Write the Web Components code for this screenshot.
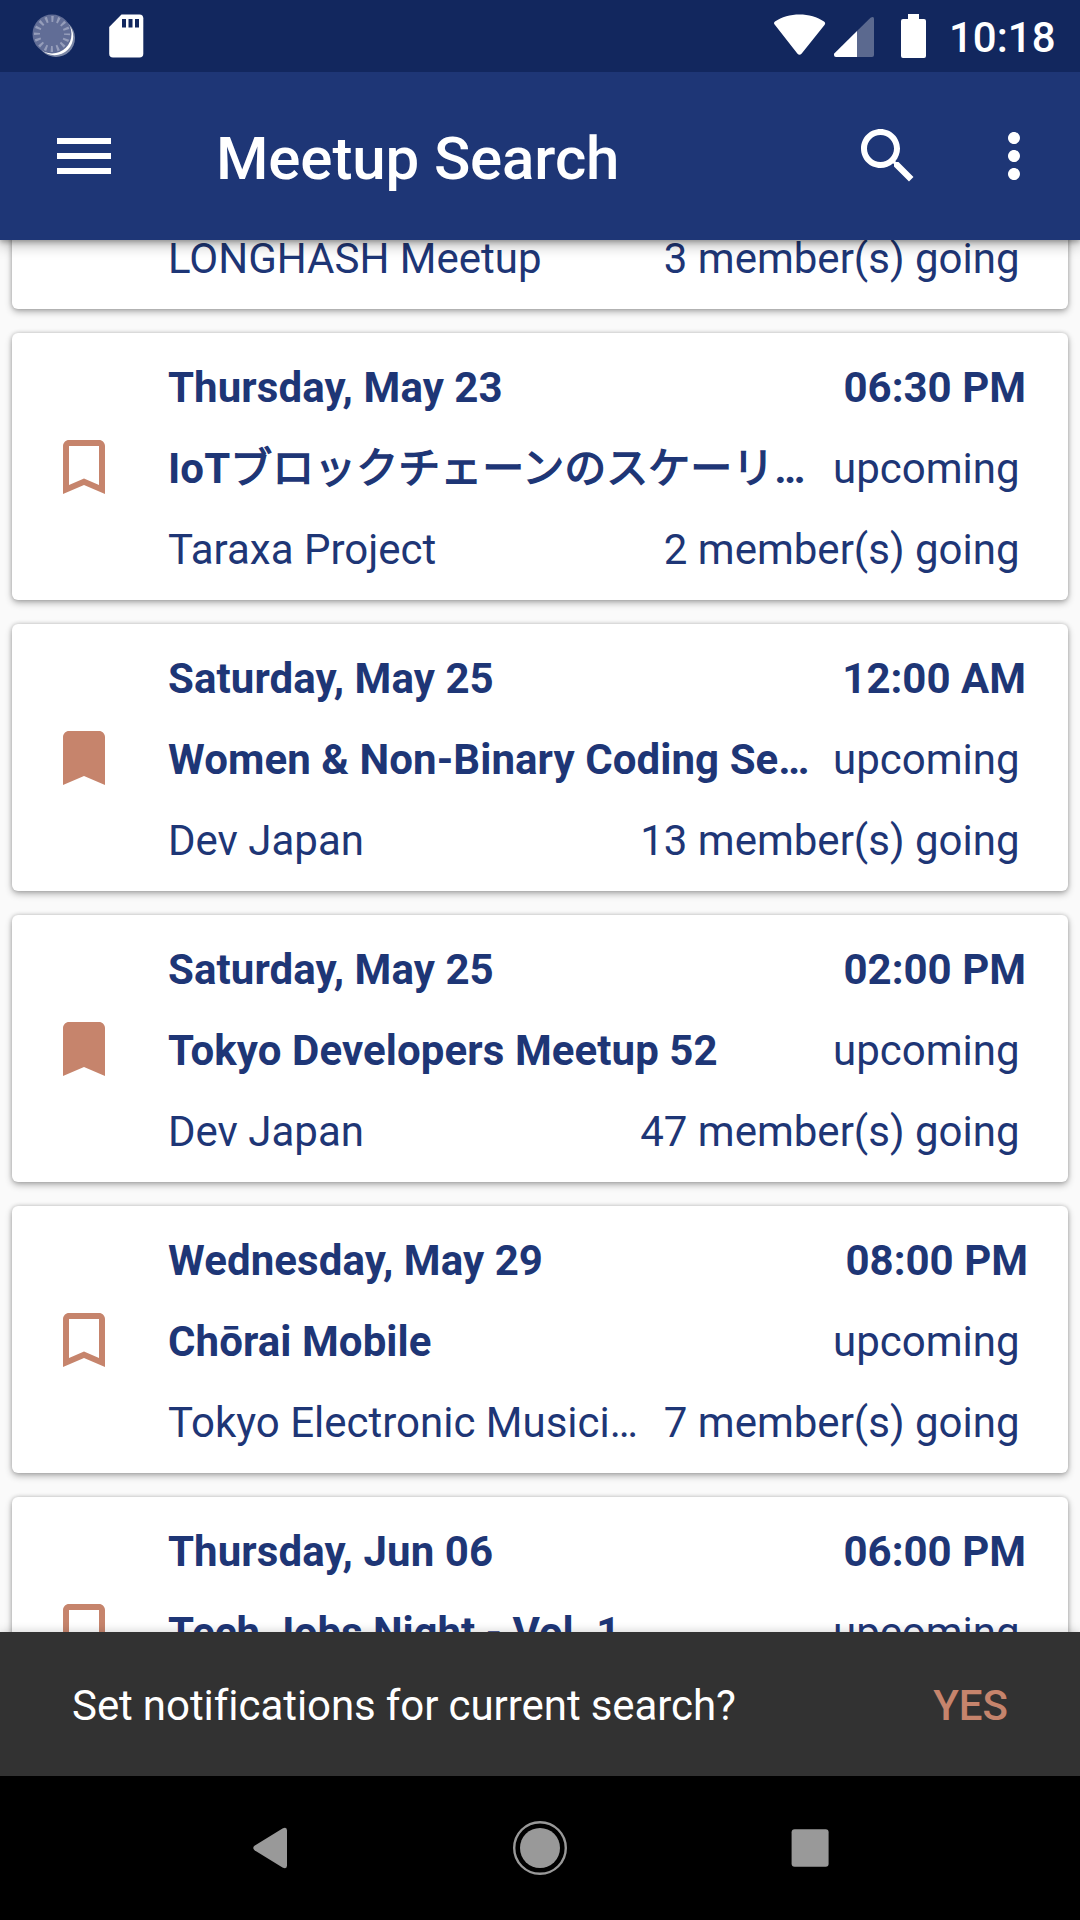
<!DOCTYPE html>
<html lang="en">
<head>
<meta charset="utf-8">
<title>Meetup Search</title>
<style>
html,body{margin:0;padding:0}
body{width:1080px;height:1920px;overflow:hidden;font-family:Roboto,"Noto Sans CJK JP",sans-serif;background:#fafafa;text-autospace:no-autospace}
</style>
</head>
<body>
<meetup-app></meetup-app>
<script>
const define = (name, html, setup) => customElements.define(name, class extends HTMLElement {
  constructor() {
    super();
    this.attachShadow({mode: 'open'}).innerHTML = html.trim();
  }
  connectedCallback() { if (setup) setup(this, this.shadowRoot); }
});

define('status-bar', `
<style>
:host{display:flex;height:72px;flex:none;background:#12275e;color:#fff;align-items:flex-start;justify-content:space-between;z-index:3}
svg{display:block}
.right{display:flex}
.clock{font-size:42px;font-weight:500;line-height:49px;padding-top:13px;width:131px}
</style>
<svg width="160" height="72" viewBox="0 0 160 72">
  <circle cx="56" cy="38" r="19" fill="#fff" opacity=".45"/>
  <circle cx="54.6" cy="36.6" r="18.6" fill="#fff"/>
  <circle cx="52" cy="34" r="19.5" fill="#616d96"/>
  <circle cx="52" cy="34" r="15" fill="none" stroke="#959dba" stroke-width="6" stroke-dasharray="2.2 3.69" stroke-dashoffset="1.1"/>
  <path d="M121.500 14.500H139.500Q143.300 14.500 143.300 18.300V53.700Q143.300 57.500 139.500 57.500H113Q109.200 57.500 109.200 53.700V27Z" fill="#fff"/>
  <path d="M122 19h4v8.500h-4zM128.500 19h4v8.500h-4zM135 19h4v8.500h-4z" fill="#12275e"/>
</svg>
<div class="right">
  <svg width="183" height="72" viewBox="766 0 183 72" fill="#fff">
    <path d="M775 25Q773 23 775 21.500C788 12 811 12 824 21.500Q826 23 824.500 25L801.500 53.700Q799.500 56 797.500 53.700Z"/>
    <path d="M857 31V57H836Q834 57 834 55V53.800Z"/>
    <path d="M857 31L870.500 17.800Q874 15.500 874 19V55Q874 57 872 57H857Z" opacity=".31"/>
    <path d="M908 14h11v5h5q2 0 2 2v35q0 2-2 2h-21q-2 0-2-2v-35q0-2 2-2h5z"/>
  </svg>
  <div class="clock">10:18</div>
</div>`);

define('app-bar', `
<style>
:host{display:flex;height:168px;flex:none;box-sizing:border-box;align-items:center;padding:0 30px 0 48px;background:#1e3676;color:#fff;z-index:2;box-shadow:0 4px 14px rgba(0,0,0,.32),0 2px 5px rgba(0,0,0,.25)}
svg{display:block;width:72px;height:72px;fill:#fff;flex:none}
h1{margin:0 0 0 96px;padding-top:6px;font-size:60px;font-weight:500;line-height:70px;letter-spacing:-.12px;flex:1}
.actions{display:flex;gap:54px}
</style>
<svg viewBox="0 0 24 24"><path d="M3 18h18v-2H3v2zm0-5h18v-2H3v2zm0-7v2h18V6H3z"/></svg>
<h1><slot></slot></h1>
<div class="actions">
<svg viewBox="0 0 24 24"><path d="M15.500 14h-.79l-.28-.27C15.410 12.590 16 11.110 16 9.500 16 5.910 13.090 3 9.500 3S3 5.910 3 9.500 5.910 16 9.500 16c1.610 0 3.090-.59 4.230-1.570l.27.28v.79l5 4.990L20.490 19l-4.990-5zm-6 0C7.010 14 5 11.990 5 9.500S7.010 5 9.500 5 14 7.010 14 9.500 11.990 14 9.500 14z"/></svg>
<svg viewBox="0 0 24 24"><path d="M12 8c1.100 0 2-.9 2-2s-.9-2-2-2-2 .9-2 2 .9 2 2 2zm0 2c-1.100 0-2 .9-2 2s.9 2 2 2 2-.9 2-2-.9-2-2-2zm0 6c-1.100 0-2 .9-2 2s.9 2 2 2 2-.9 2-2-.9-2-2-2z"/></svg>
</div>`);

define('book-mark', `
<style>:host{display:block;width:72px;height:72px}svg{display:block;width:72px;height:72px;fill:#c6846c}</style>
<svg viewBox="0 0 24 24"><path/></svg>`, (el, root) => {
  root.querySelector('path').setAttribute('d', el.hasAttribute('saved')
    ? 'M17 3H7c-1.100 0-1.990.9-1.990 2L5 21l7-3 7 3V5c0-1.100-.9-2-2-2z'
    : 'M17 3H7c-1.100 0-1.990.9-1.990 2L5 21l7-3 7 3V5c0-1.100-.9-2-2-2zm0 15l-5-2.180L7 18V5h10v13z');
});

define('meetup-card', `
<style>
:host{display:flex;flex:none;box-sizing:border-box;height:267px;margin:0 12px;padding-left:36px;align-items:center;background:#fff;border-radius:6px;color:#1e3676;box-shadow:0 3px 7px rgba(0,0,0,.29),0 0 4px rgba(0,0,0,.2)}
.rows{flex:1;margin-left:48px;padding-top:4px;font-size:42px;line-height:81px;white-space:nowrap}
.row{display:flex;justify-content:space-between;height:81px;padding-right:48.500px}
.row:first-child{padding-right:var(--time-inset,42px)}
.b{font-weight:700}
slot[name=date],slot[name=title]{letter-spacing:.08px}
</style>
<book-mark></book-mark>
<div class="rows">
<div class="row b"><slot name="date"></slot><slot name="time"></slot></div>
<div class="row"><span class="b"><slot name="title"></slot></span><slot name="status"></slot></div>
<div class="row"><slot name="group"></slot><slot name="count"></slot></div>
</div>`, (el, root) => {
  if (el.hasAttribute('saved')) {
    const mark = document.createElement('book-mark');
    mark.setAttribute('saved', '');
    root.querySelector('book-mark').replaceWith(mark);
  }
});

// Kana set in the regular weight with an outline, the way the platform emboldens its fallback font.
define('kana-text', `<style>:host{font-family:"Noto Sans CJK JP",sans-serif;font-weight:400;-webkit-text-stroke:1.400px currentColor;letter-spacing:0;line-height:1}</style><slot></slot>`);

define('meetup-list', `
<style>
:host{display:flex;flex-direction:column;gap:24px;height:1392px;flex:none;overflow:hidden;background:#fafafa}
::slotted(:first-child){margin-top:-198px}
</style><slot></slot>`);

define('snack-bar', `
<style>
:host{display:flex;height:144px;flex:none;box-sizing:border-box;align-items:center;justify-content:space-between;padding:3px 72px 0 72px;background:#323232;color:#fff;font-size:42px;z-index:2;box-shadow:0 0 10px rgba(0,0,0,.2)}
span{letter-spacing:-.05px;word-spacing:-.3px;font-variant-ligatures:common-ligatures}
button{all:unset;color:#c6846c;font-weight:500}
</style><span><slot></slot></span><button>YES</button>`);

define('nav-bar', `
<style>:host{display:flex;height:144px;flex:none;align-items:center;justify-content:center;gap:198px;background:#000;z-index:3}
svg{display:block;width:72px;height:72px;fill:#999}</style>
<svg viewBox="-2 0 72 72"><path d="M18.500 33.800L46.500 16.500Q51 14.500 51 18.500V53.500Q51 57.500 46.500 55.500L18.500 38.200Q16 36 18.500 33.800Z"/></svg>
<svg viewBox="0 0 72 72"><circle cx="36" cy="36" r="20"/><circle cx="36" cy="36" r="25.800" fill="none" stroke="#999" stroke-width="2.400"/></svg>
<svg viewBox="0 0 72 72"><rect x="17.600" y="17.200" width="37" height="37.600" rx="3"/></svg>`);

const meetups = [
  {group: 'LONGHASH Meetup', count: '3 member(s) going'},
  {date: 'Thursday, May 23', time: '06:30 PM', title: 'IoT<kana-text>ブロックチェーンのスケーリ</kana-text>…', status: 'upcoming', group: 'Taraxa Project', count: '2 member(s) going'},
  {date: 'Saturday, May 25', time: '12:00 AM', title: 'Women &amp; Non-Binary Coding Se…', status: 'upcoming', group: 'Dev Japan', count: '13 member(s) going', saved: true},
  {date: 'Saturday, May 25', time: '02:00 PM', title: 'Tokyo Developers Meetup 52', status: 'upcoming', group: 'Dev Japan', count: '47 member(s) going', saved: true},
  {date: 'Wednesday, May 29', time: '08:00 PM', title: 'Chōrai Mobile', status: 'upcoming', group: 'Tokyo Electronic Musici…', count: '7 member(s) going', inset: 40},
  {date: 'Thursday, Jun 06', time: '06:00 PM', title: '<span style="letter-spacing:-.05px">Tech Jobs Night - Vol. 1</span>', status: 'upcoming'}
];
const fields = ['date', 'time', 'title', 'status', 'group', 'count'];
const card = m => `<meetup-card${m.saved ? ' saved' : ''}${m.inset ? ` style="--time-inset:${m.inset}px"` : ''}>${fields.map(f => `<span slot="${f}">${m[f] || ''}</span>`).join('')}</meetup-card>`;

define('meetup-app', `
<style>:host{display:flex;flex-direction:column;width:1080px;height:1920px;overflow:hidden}</style>
<status-bar></status-bar>
<app-bar>Meetup Search</app-bar>
<meetup-list>${meetups.map(card).join('')}</meetup-list>
<snack-bar>Set notifications for current search?</snack-bar>
<nav-bar></nav-bar>`);
</script>
</body>
</html>
